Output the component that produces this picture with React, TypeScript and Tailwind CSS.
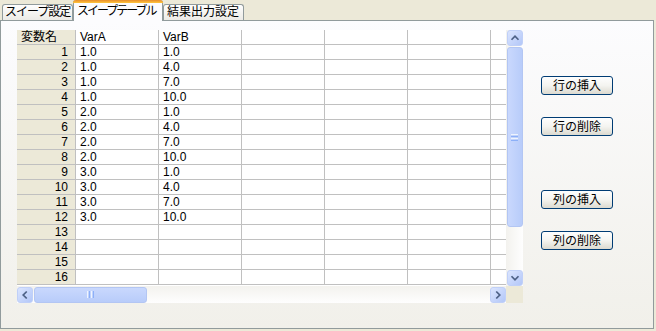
import React from 'react';

const rows: [string, string][] = [
  ['1.0', '1.0'],
  ['1.0', '4.0'],
  ['1.0', '7.0'],
  ['1.0', '10.0'],
  ['2.0', '1.0'],
  ['2.0', '4.0'],
  ['2.0', '7.0'],
  ['2.0', '10.0'],
  ['3.0', '1.0'],
  ['3.0', '4.0'],
  ['3.0', '7.0'],
  ['3.0', '10.0'],
  ['', ''],
  ['', ''],
  ['', ''],
  ['', ''],
];

const extraCols = [0, 1, 2, 3];

function Arrow({ dir }: { dir: 'up' | 'down' | 'left' | 'right' }) {
  const pts = {
    up: '4,10 8,6 12,10',
    down: '4,6 8,10 12,6',
    left: '10,4 6,8 10,12',
    right: '6,4 10,8 6,12',
  }[dir];
  return (
    <div className="w-[16px] h-[16px] shrink-0 rounded-[3px] border border-[#c0d0f8] bg-gradient-to-br from-[#dbe5fe] to-[#b3c7f8] flex items-center justify-center">
      <svg width="16" height="16" viewBox="0 0 16 16">
        <polyline points={pts} fill="none" stroke="#4d6185" strokeWidth="2" strokeLinejoin="miter" />
      </svg>
    </div>
  );
}

function XpButton({ label, className = '' }: { label: string; className?: string }) {
  return (
    <div
      className={`w-[72px] h-[19px] rounded-[3px] border border-[#003c74] bg-gradient-to-b from-[#fefefe] via-[#f4f4f0] to-[#dcdad0] flex items-center justify-center text-[12px] leading-none text-black ${className}`}
    >
      {label}
    </div>
  );
}

export default function App() {
  return (
    <div className="w-[656px] h-[331px] bg-[#ece9d8] font-['Liberation_Sans','Noto_Sans_CJK_JP',sans-serif] text-black overflow-hidden">
      {/* tabs */}
      <div className="h-[20px] flex items-end pl-[2px]">
        <div className="w-[71px] h-[16px] border border-b-0 border-[#919b9c] rounded-t-[3px] bg-gradient-to-b from-[#fefefe] to-[#ecebe6] text-[12px] leading-[14px] pl-[2px] whitespace-nowrap tracking-[-1px]">
          スイープ設定
        </div>
        <div className="relative z-10 w-[90px] h-[21px] -mb-px border-x border-[#919b9c] rounded-t-[3px] bg-[#fcfcfe] flex flex-col">
          <div className="h-[3px] -mx-px rounded-t-[3px] bg-gradient-to-b from-[#e68b2c] to-[#ffc73c]" />
          <div className="text-[12px] leading-[14px] pl-[3px] pt-px whitespace-nowrap tracking-[-2px]">スイープテーブル</div>
        </div>
        <div className="w-[81px] h-[16px] border border-b-0 border-[#919b9c] rounded-t-[3px] bg-gradient-to-b from-[#fefefe] to-[#ecebe6] text-[12px] leading-[14px] pl-[3px] whitespace-nowrap">
          結果出力設定
        </div>
      </div>

      {/* panel */}
      <div className="w-[654px] h-[309px] border border-[#919b9c] bg-gradient-to-b from-[#fcfcfe] to-[#f1f0ea] pl-[16px] pt-[9px] flex items-start">
        {/* grid with scrollbars */}
        <div className="w-[506px] flex flex-col">
          <div className="flex h-[256px]">
            <div className="w-[489px] h-[256px] overflow-hidden bg-white">
              <div className="flex h-[15px] w-max">
                <div className="w-[59px] shrink-0 h-[15px] border-r border-b border-[#c0c0c0] bg-[#ece9d8] text-[12px] leading-[14px] pl-[4px]">
                  変数名
                </div>
                <div className="w-[83px] shrink-0 h-[15px] border-r border-b border-[#c0c0c0] text-[12px] leading-[14px] pl-[4px]">
                  VarA
                </div>
                <div className="w-[83px] shrink-0 h-[15px] border-r border-b border-[#c0c0c0] text-[12px] leading-[14px] pl-[4px]">
                  VarB
                </div>
                {extraCols.map((c) => (
                  <div key={c} className="w-[83px] shrink-0 h-[15px] border-r border-b border-[#c0c0c0]" />
                ))}
              </div>
              {rows.map((r, i) => (
                <div key={i} className="flex h-[15px] w-max">
                  <div className="w-[59px] shrink-0 h-[15px] border-r border-b border-[#c0c0c0] bg-[#ece9d8] text-[12px] leading-[14px] text-right pr-[7px]">
                    {i + 1}
                  </div>
                  <div className="w-[83px] shrink-0 h-[15px] border-r border-b border-[#c0c0c0] text-[12px] leading-[14px] pl-[4px]">
                    {r[0]}
                  </div>
                  <div className="w-[83px] shrink-0 h-[15px] border-r border-b border-[#c0c0c0] text-[12px] leading-[14px] pl-[4px]">
                    {r[1]}
                  </div>
                  {extraCols.map((c) => (
                    <div key={c} className="w-[83px] shrink-0 h-[15px] border-r border-b border-[#c0c0c0]" />
                  ))}
                </div>
              ))}
            </div>
            {/* vertical scrollbar */}
            <div className="w-[17px] h-[256px] bg-gradient-to-r from-[#f3f2ee] to-[#fefefe] flex flex-col items-center">
              <Arrow dir="up" />
              <div className="mt-px w-[16px] h-[180px] rounded-[3px] border border-[#b3c6f3] bg-gradient-to-r from-[#c9d8fd] to-[#b8ccfa] flex flex-col items-center justify-center gap-px">
                <div className="w-[7px] h-px bg-[#eef4fe]" />
                <div className="w-[7px] h-px bg-[#8cb0f8]" />
                <div className="w-[7px] h-px bg-[#eef4fe]" />
                <div className="w-[7px] h-px bg-[#8cb0f8]" />
              </div>
              <div className="flex-1" />
              <Arrow dir="down" />
            </div>
          </div>
          {/* horizontal scrollbar */}
          <div className="flex h-[17px]">
            <div className="w-[489px] h-[17px] bg-gradient-to-b from-[#f3f2ee] to-[#fefefe] flex items-center">
              <Arrow dir="left" />
              <div className="ml-[1px] w-[113px] h-[16px] rounded-[3px] border border-[#b3c6f3] bg-gradient-to-b from-[#c9d8fd] to-[#b8ccfa] flex items-center justify-center gap-px">
                <div className="h-[7px] w-px bg-[#eef4fe]" />
                <div className="h-[7px] w-px bg-[#8cb0f8]" />
                <div className="h-[7px] w-px bg-[#eef4fe]" />
                <div className="h-[7px] w-px bg-[#8cb0f8]" />
              </div>
              <div className="flex-1" />
              <Arrow dir="right" />
            </div>
            <div className="w-[17px] h-[17px] bg-[#ece9d8]" />
          </div>
        </div>

        {/* buttons */}
        <div className="ml-[18px] flex flex-col">
          <XpButton label="行の挿入" className="mt-[46px]" />
          <XpButton label="行の削除" className="mt-[22px]" />
          <XpButton label="列の挿入" className="mt-[54px]" />
          <XpButton label="列の削除" className="mt-[22px]" />
        </div>
      </div>
    </div>
  );
}
